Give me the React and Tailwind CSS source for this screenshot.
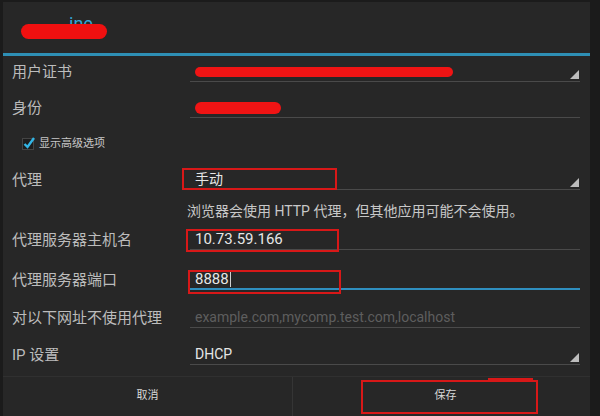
import React from "react";

const font = { fontFamily: '"Roboto","Noto Sans CJK SC","Noto Sans",sans-serif' };

function Tri() {
  return (
    <svg width="9" height="9" viewBox="0 0 9 9" className="absolute right-[1px] bottom-[2px]">
      <polygon points="9,0 9,9 0,9" fill="#bdbdbd" />
    </svg>
  );
}

function Row({ h, label, children, dropdown, active }) {
  return (
    <div className={`flex items-center ${h}`}>
      <div className="w-[187px] pl-[9px] text-[15px] text-[#bcbcbc] leading-none">{label}</div>
      <div
        className={`relative flex-1 mr-[10px] h-[20px] flex items-center pl-[5px] border-b ${
          active ? "border-[#2f8fbf] border-b-2" : "border-[#4a4a4a]"
        }`}
      >
        {children}
        {dropdown && <Tri />}
      </div>
    </div>
  );
}

export default function App() {
  return (
    <div className="w-[600px] h-[416px] bg-[#1b1b1b] overflow-hidden relative" style={font}>
      <div className="ml-[3px] mt-[2px] w-[587px] h-[414px] bg-[#272727] flex flex-col">
        {/* title */}
        <div className="h-[51px] relative">
          <div className="absolute left-[66px] top-[13px] text-[#33a8d8] text-[18px] leading-none">ine</div>
          <div className="absolute left-[18px] top-[22px] w-[86px] h-[15px] bg-[#f01010] rounded-full" />
        </div>
        <div className="h-[3px] bg-[#2e8fb5]" />

        <Row h="h-[32px]" label="用户证书" dropdown>
          <div className="relative w-[258px] h-[14px]">
            <div className="absolute left-0 top-[2px] w-[258px] h-[10px] bg-[#f01414] rounded-full" />
          </div>
        </Row>
        <Row h="h-[40px]" label="身份">
          <div className="w-[86px] h-[12px] bg-[#f01414] rounded-full" />
        </Row>

        <div className="h-[30px] flex items-center pl-[18px] gap-[3px]">
          <svg width="15" height="15" viewBox="0 0 15 15">
            <rect x="1.5" y="2.5" width="11" height="11" fill="#1d1d1d" stroke="#444" />
            <path d="M3.5 8 L6.5 11 L13 2" stroke="#33b5e5" strokeWidth="2.4" fill="none" />
          </svg>
          <span className="text-[11px] text-[#c8c8c8] leading-none">显示高级选项</span>
        </div>

        <Row h="h-[44px]" label="代理" dropdown>
          <span className="text-[14px] text-[#e6e6e6]">手动</span>
        </Row>

        <div className="h-[18px] flex items-center pl-[184px] text-[14px] text-[#c8c8c8] leading-none">
          浏览器会使用 HTTP 代理，但其他应用可能不会使用。
        </div>

        <Row h="h-[40px]" label="代理服务器主机名">
          <span className="text-[15px] text-[#e6e6e6]">10.73.59.166</span>
        </Row>
        <Row h="h-[40px]" label="代理服务器端口" active>
          <span className="text-[15px] text-[#e6e6e6]">8888</span>
          <span className="w-[1px] h-[16px] bg-[#d0d0d0] ml-[1px]" />
        </Row>
        <Row h="h-[36px]" label="对以下网址不使用代理">
          <span className="text-[14px] text-[#5e5e5e]">example.com,mycomp.test.com,localhost</span>
        </Row>
        <Row h="h-[38px]" label="IP 设置" dropdown>
          <span className="text-[14px] text-[#e6e6e6]">DHCP</span>
        </Row>

        <div className="flex-1 flex border-t border-[#303030] mt-[2px]">
          <div className="flex-1 flex items-center justify-center border-r border-[#353535] text-[11px] text-[#d8d8d8]">
            取消
          </div>
          <div className="flex-1 flex items-center justify-center text-[11px] text-[#d8d8d8] pl-[8px]">
            保存
          </div>
        </div>
      </div>

      {/* annotation boxes */}
      <div className="absolute left-[182px] top-[168px] w-[155px] h-[22px] border-2 border-[#d81818]" />
      <div className="absolute left-[186px] top-[229px] w-[153px] h-[23px] border-2 border-[#d81818]" />
      <div className="absolute left-[188px] top-[270px] w-[153px] h-[24px] border-2 border-[#d81818]" />
      <div className="absolute left-[361px] top-[380px] w-[177px] h-[34px] border-2 border-[#d81818]" />
      <div className="absolute left-[488px] top-[378px] w-[45px] h-[2px] bg-[#d81818]" />
    </div>
  );
}
